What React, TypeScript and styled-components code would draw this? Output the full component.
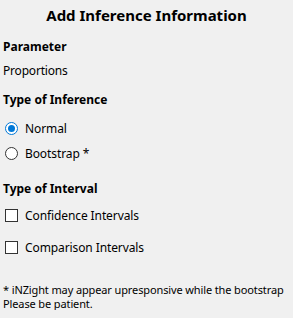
import styled, { createGlobalStyle } from "styled-components";

const GlobalStyle = createGlobalStyle`
  html, body {
    margin: 0;
    padding: 0;
    background: #f0f0f0;
  }
  body {
    font-family: "Noto Sans", "Open Sans", sans-serif;
    color: #000;
  }
`;

const Panel = styled.div`
  width: 293px;
  height: 318px;
  background: #f0f0f0;
  display: flex;
  flex-direction: column;
  overflow: hidden;
`;

const Title = styled.h1`
  margin: 0;
  height: 30px;
  display: flex;
  align-items: center;
  justify-content: center;
  font-size: 15px;
  font-weight: 700;
`;

const Heading = styled.div<{ $top: number }>`
  margin-top: ${(p) => p.$top}px;
  height: 20px;
  padding-left: 3px;
  display: flex;
  align-items: center;
  font-size: 12px;
  font-weight: 700;
`;

const Value = styled.div`
  margin-top: 4px;
  height: 20px;
  padding-left: 3px;
  display: flex;
  align-items: center;
  font-size: 12px;
  letter-spacing: -0.2px;
`;

const Option = styled.label<{ $top: number }>`
  margin-top: ${(p) => p.$top}px;
  height: 22px;
  padding-left: 5px;
  display: flex;
  align-items: center;
  gap: 7px;
  font-size: 12px;
  letter-spacing: -0.1px;
`;

const Radio = styled.span<{ $checked?: boolean }>`
  width: 13px;
  height: 13px;
  box-sizing: border-box;
  border-radius: 50%;
  border: 1px solid ${(p) => (p.$checked ? "#0078d7" : "#333")};
  background: #fff;
  display: flex;
  align-items: center;
  justify-content: center;

  &::after {
    content: "";
    display: ${(p) => (p.$checked ? "block" : "none")};
    width: 7px;
    height: 7px;
    border-radius: 50%;
    background: #0078d7;
  }
`;

const Checkbox = styled.span`
  width: 13px;
  height: 13px;
  box-sizing: border-box;
  border: 1px solid #333;
  background: #fff;
`;

const Footnote = styled.div`
  margin-top: 25px;
  width: 285px;
  padding-left: 3px;
  box-sizing: border-box;
  overflow: hidden;
  font-size: 11px;
  line-height: 13.5px;
  letter-spacing: -0.12px;
`;

const NoteLine = styled.div`
  white-space: nowrap;
`;

export default function App() {
  return (
    <>
      <GlobalStyle />
      <Panel>
        <Title>Add Inference Information</Title>
        <Heading $top={6}>Parameter</Heading>
        <Value>Proportions</Value>
        <Heading $top={9}>Type of Inference</Heading>
        <Option $top={8}>
          <Radio $checked />
          Normal
        </Option>
        <Option $top={3}>
          <Radio />
          Bootstrap *
        </Option>
        <Heading $top={14}>Type of Interval</Heading>
        <Option $top={6}>
          <Checkbox />
          Confidence Intervals
        </Option>
        <Option $top={10}>
          <Checkbox />
          Comparison Intervals
        </Option>
        <Footnote>
          <NoteLine>* iNZight may appear upresponsive while the bootstrap</NoteLine>
          <NoteLine>Please be patient.</NoteLine>
        </Footnote>
      </Panel>
    </>
  );
}
